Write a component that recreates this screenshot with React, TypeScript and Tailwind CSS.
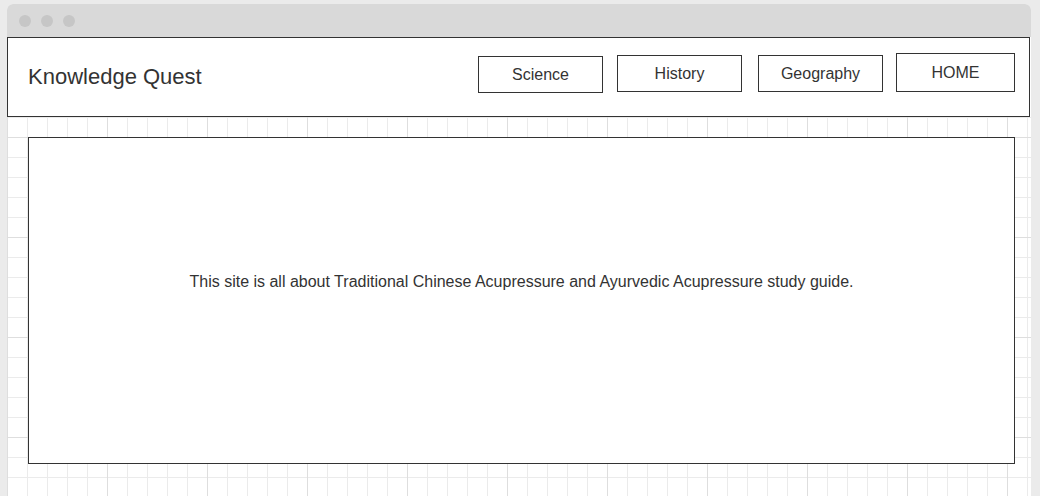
import React from "react";

const navItems = [
  { label: "Science", className: "mt-[18px] w-[125px] h-[37px]" },
  { label: "History", className: "mt-[17px] w-[125px] h-[37px] ml-[14px]" },
  { label: "Geography", className: "mt-[17px] w-[125px] h-[37px] ml-[16px]" },
  { label: "HOME", className: "mt-[15px] w-[119px] h-[39px] ml-[13px]" },
];

export default function App() {
  return (
    <div
      className="h-[496px] w-[1040px] overflow-hidden bg-[#ebebeb] pt-1 pl-[7px] text-[#333]"
      style={{ fontFamily: '"Liberation Sans", Arial, sans-serif' }}
    >
      <div className="flex h-full w-[1024px] flex-col overflow-hidden rounded-t-[6px] bg-white">
        {/* title bar */}
        <div className="flex h-[33px] shrink-0 items-center gap-[10px] bg-[#d9d9d9] pl-3">
          <span className="h-3 w-3 rounded-full bg-[#c6c6c6]" />
          <span className="h-3 w-3 rounded-full bg-[#c6c6c6]" />
          <span className="h-3 w-3 rounded-full bg-[#c6c6c6]" />
        </div>

        {/* header */}
        <header className="flex h-[80px] w-[1023px] shrink-0 items-start border border-[#333] bg-white pr-[14px]">
          <div className="ml-[20px] self-center pb-[1px] text-[22px] leading-none">Knowledge Quest</div>
          <nav className="ml-auto flex items-start">
            {navItems.map((item) => (
              <button
                key={item.label}
                className={`flex items-center justify-center border border-[#333] bg-white text-[16px] text-[#333] ${item.className}`}
              >
                {item.label}
              </button>
            ))}
          </nav>
        </header>

        {/* canvas */}
        <div className="flex-1 bg-white bg-[image:linear-gradient(#dedede_1px,transparent_1px),linear-gradient(90deg,#dedede_1px,transparent_1px),linear-gradient(#ebebeb_1px,transparent_1px),linear-gradient(90deg,#ebebeb_1px,transparent_1px)] bg-[size:100px_100px,100px_100px,20px_20px,20px_20px] bg-[position:0_20px,0_0,0_0,0_0] pl-[21px] pt-5">
          <div className="flex h-[327px] w-[987px] items-center justify-center border border-[#333] bg-white pb-[37px] text-[16px]">
            This site is all about Traditional Chinese Acupressure and Ayurvedic Acupressure study guide.
          </div>
        </div>
      </div>
    </div>
  );
}
